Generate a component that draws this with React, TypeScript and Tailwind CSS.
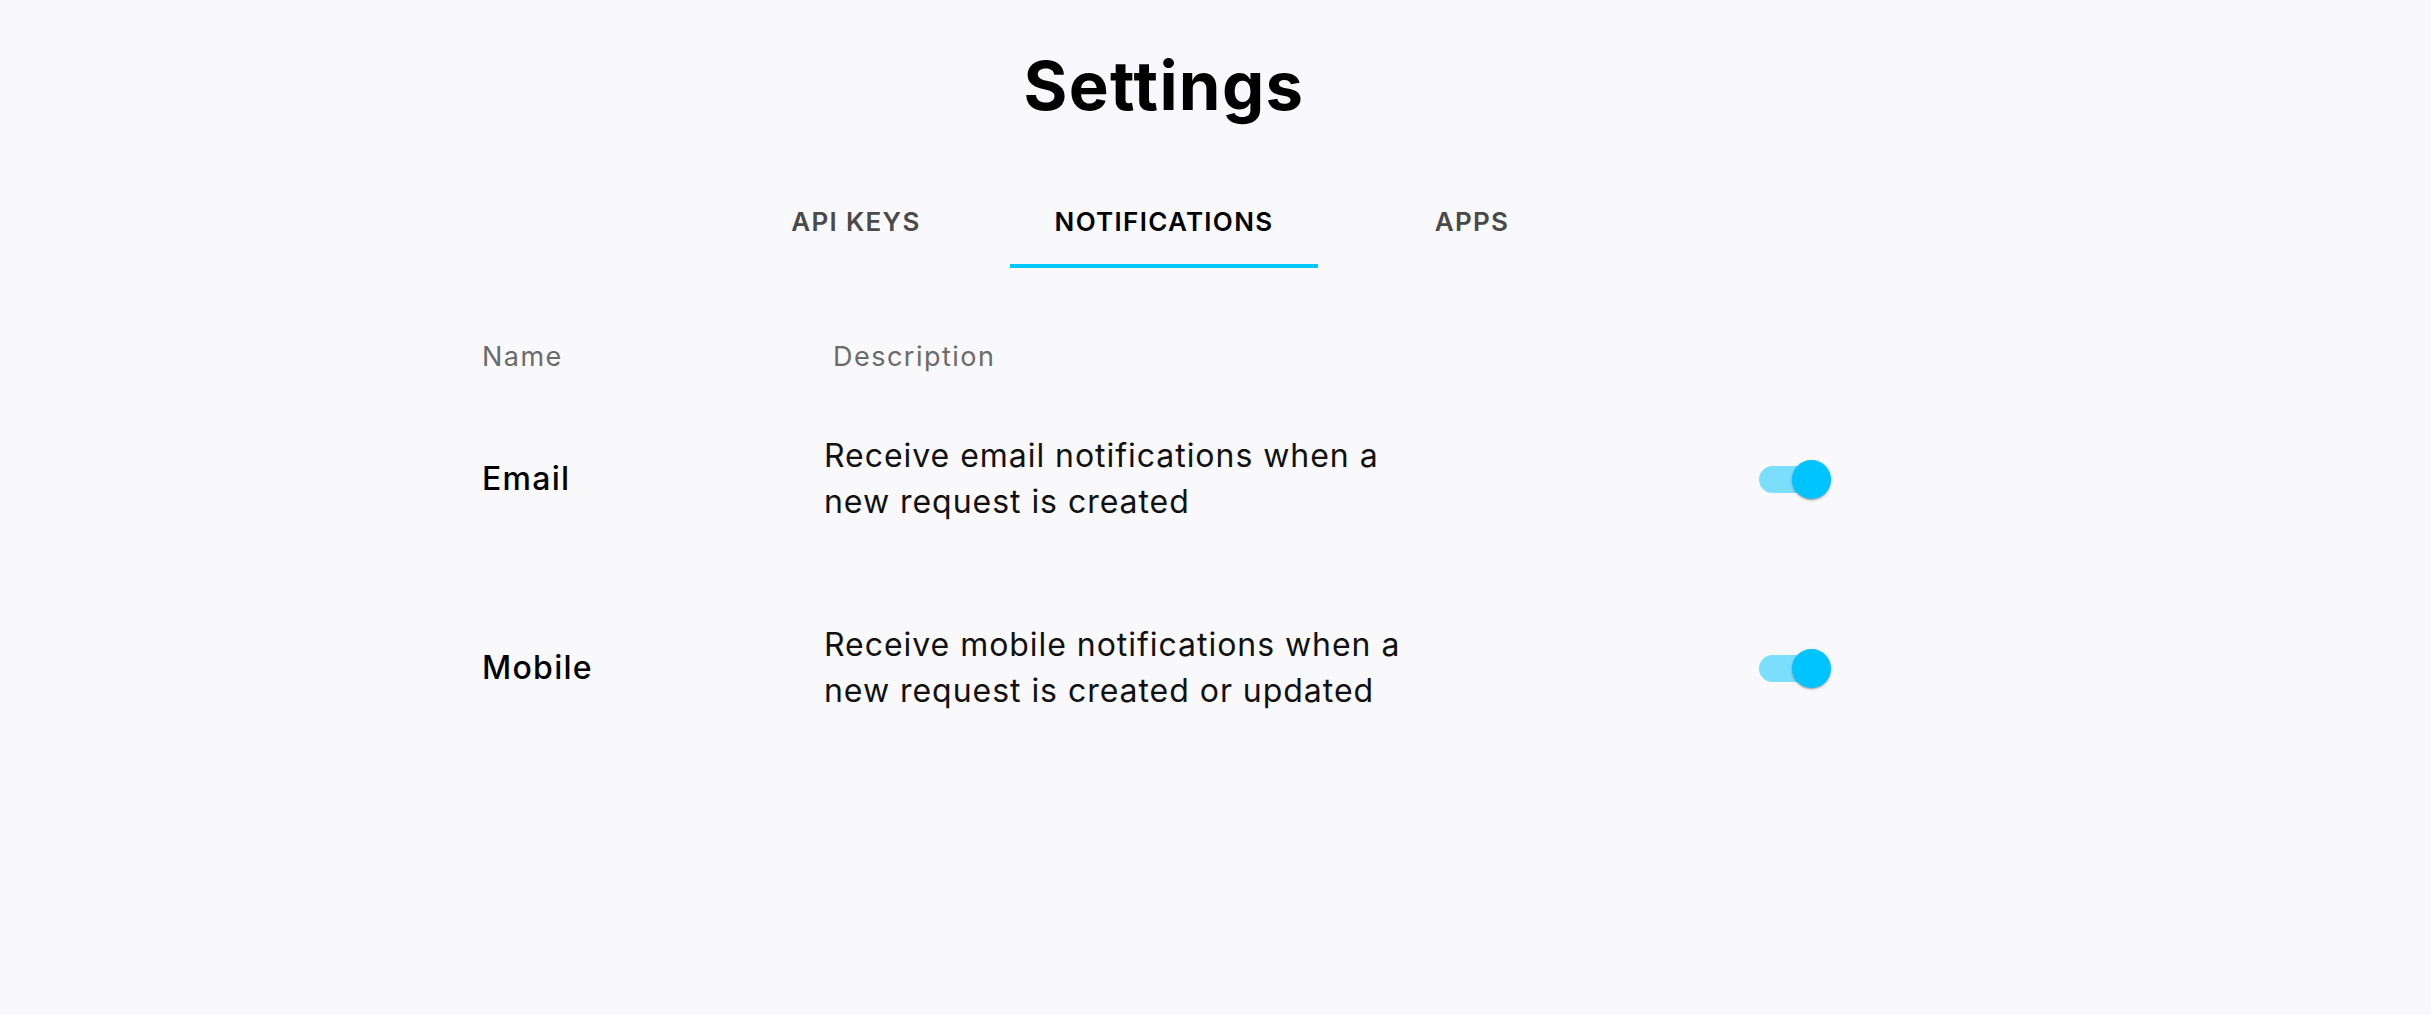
import React from "react";

const font = { fontFamily: "Inter, 'Noto Sans', sans-serif" };

function Toggle() {
  return (
    <div className="relative w-[72px] h-[39px] shrink-0">
      <div className="absolute left-0 top-[6px] w-[66px] h-[27px] rounded-full bg-[#00c4ff]/50" />
      <div className="absolute right-0 top-0 w-[39px] h-[39px] rounded-full bg-[#00c4ff] shadow-[0_2px_2px_-1px_rgba(0,0,0,0.2),0_1px_2px_0_rgba(0,0,0,0.14),0_1px_4px_0_rgba(0,0,0,0.12)]" />
    </div>
  );
}

const rows = [
  { name: "Email", lines: ["Receive email notifications when a", "new request is created"] },
  { name: "Mobile", lines: ["Receive mobile notifications when a", "new request is created or updated"] },
];

export default function App() {
  return (
    <div className="min-h-screen w-full bg-[#f9f9fb] text-[#111]" style={font}>
      <div className="ml-[482px] w-[1364px] pt-[46px]">
        <h1 className="text-center text-[67px] leading-[80px] font-bold tracking-[0.02em] text-black">Settings</h1>
        <div className="mt-[80px] flex justify-center">
          {["API KEYS", "NOTIFICATIONS", "APPS"].map((t) => {
            const active = t === "NOTIFICATIONS";
            return (
              <div
                key={t}
                className={
                  active
                    ? "w-[308px] text-center text-[26px] leading-[32px] font-semibold tracking-[0.05em] pb-[26px] border-b-4 border-[#00c8ff] text-black"
                    : "w-[308px] text-center text-[26px] leading-[32px] font-semibold tracking-[0.05em] pb-[26px] border-b-4 border-transparent text-[#4a4a4a]"
                }
              >
                {t}
              </div>
            );
          })}
        </div>
        <div className="mt-[71px] flex text-[27px] leading-[36px] tracking-[0.055em] text-[#6b6b6b]">
          <div className="w-[342px]">Name</div>
          <div className="pl-[9px]">Description</div>
        </div>
        <div className="mt-[58px] flex flex-col gap-[97px] pr-[15px]">
          {rows.map((r) => (
            <div key={r.name} className="flex items-center">
              <div className="w-[342px] text-[32px] leading-[46px] font-medium tracking-[0.04em] text-black">{r.name}</div>
              <div className="flex-1 text-[32px] leading-[46px] tracking-[0.03em] text-[#111] whitespace-nowrap">
                {r.lines[0]}
                <br />
                {r.lines[1]}
              </div>
              <Toggle />
            </div>
          ))}
        </div>
      </div>
    </div>
  );
}
